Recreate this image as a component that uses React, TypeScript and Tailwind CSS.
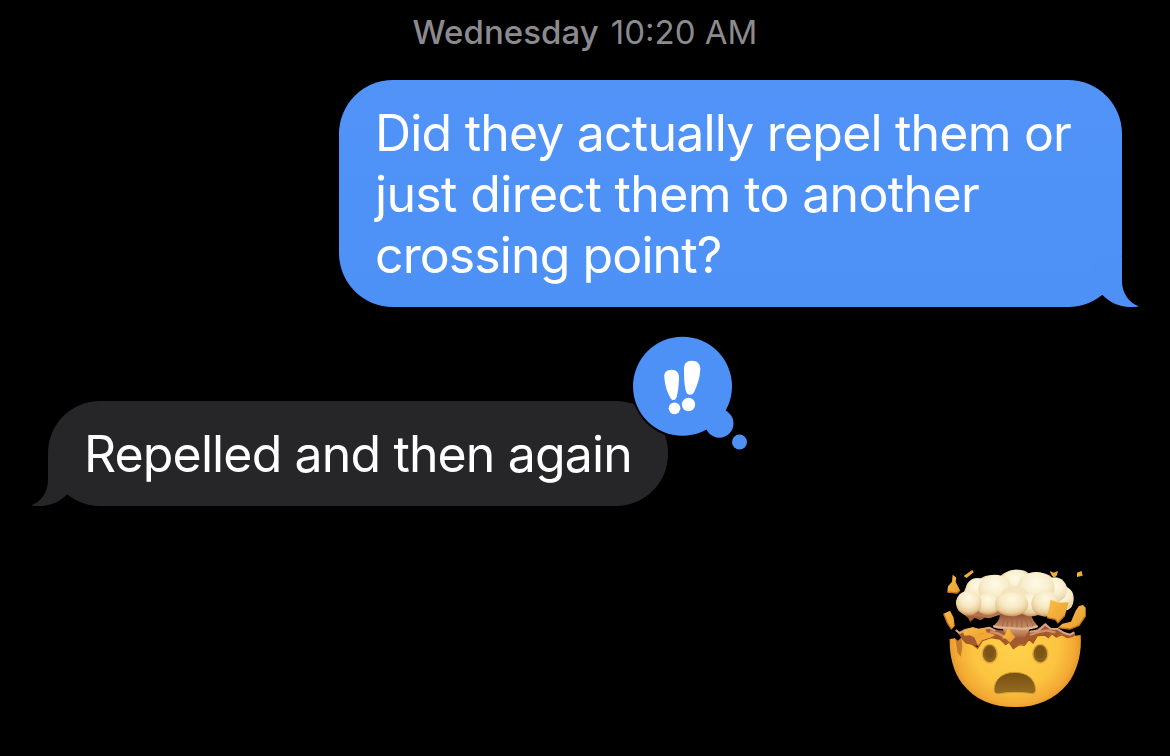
import React from "react";
import clsx from "clsx";

const question = [
  { text: "Did they actually repel them or", className: "tracking-[-0.81px]" },
  { text: "just direct them to another", className: "tracking-[-0.65px]" },
  { text: "crossing point?", className: "tracking-[-0.9px]" },
];

function Tail({ side, className }: { side: "left" | "right"; className: string }) {
  return (
    <svg
      viewBox="0 0 60 50"
      className={clsx(
        "absolute bottom-0 h-[50px] w-[60px]",
        side === "right" ? "-right-[17px]" : "-left-[17px] -scale-x-100",
        className
      )}
      fill="currentColor"
    >
      <path d="M18 0H43V24C43 36 50 46 60 49.3C47 52 33 48 23.5 38L8 28Z" />
    </svg>
  );
}

function Reaction() {
  return (
    <svg viewBox="0 0 420 405" className="absolute -top-[76px] left-[572px] h-[135px] w-[140px]">
      <circle cx="187" cy="184" r="154" fill="#000" />
      <g fill="#4d91f7">
        <circle cx="187.5" cy="184" r="148.5" />
        <circle cx="298" cy="295.5" r="42.5" />
        <circle cx="358.5" cy="351" r="22.5" />
      </g>
      <g fill="#fff">
        <path d="M133 158C131 143 140 135 154 134.500C169 134 178 143 177 160C176 185 174 202 170 215C167 227 156 228 151 218C140 199 135 180 133 158Z" />
        <circle cx="163.500" cy="250" r="17.500" />
        <path d="M192 133C192 115 200 107 215 107C232 107 241 116 241 133C240 158 232 182 222 202C217 212 203 212 199 202C193 185 192 160 192 133Z" />
        <circle cx="205.500" cy="238.500" r="20" />
      </g>
    </svg>
  );
}

function ExplodingHead() {
  return (
    <svg viewBox="0 0 510 495" className="h-[165px] w-[170px]">
      <defs>
        <radialGradient id="face" gradientUnits="userSpaceOnUse" cx="255" cy="270" r="215">
          <stop offset="0" stopColor="#ffd24b" />
          <stop offset="0.6" stopColor="#fcc440" />
          <stop offset="0.83" stopColor="#f3aa34" />
          <stop offset="1" stopColor="#d98526" />
        </radialGradient>
        <radialGradient id="puff" cx="0.5" cy="0.34" r="0.66">
          <stop offset="0" stopColor="#fffae6" />
          <stop offset="0.5" stopColor="#f9efd0" />
          <stop offset="0.85" stopColor="#eddcb0" />
          <stop offset="1" stopColor="#e0c28c" />
        </radialGradient>
        <radialGradient id="lowPuff" cx="0.5" cy="0.3" r="0.7">
          <stop offset="0" stopColor="#fff9e3" />
          <stop offset="0.5" stopColor="#f6e8c2" />
          <stop offset="0.8" stopColor="#e8cb98" />
          <stop offset="1" stopColor="#c4905c" />
        </radialGradient>
        <linearGradient id="stem" x1="0" y1="0" x2="0" y2="1">
          <stop offset="0" stopColor="#92502f" />
          <stop offset="0.65" stopColor="#cf9a72" />
          <stop offset="1" stopColor="#a6623b" />
        </linearGradient>
        <linearGradient id="shard" x1="0" y1="0" x2="1" y2="1">
          <stop offset="0" stopColor="#fcc044" />
          <stop offset="1" stopColor="#e79c30" />
        </linearGradient>
        <linearGradient id="mouth" x1="0" y1="0" x2="0" y2="1">
          <stop offset="0" stopColor="#785010" />
          <stop offset="1" stopColor="#956d22" />
        </linearGradient>
      </defs>

      {/* skull rim behind the cloud stem */}
      <path d="M76 224L88 232L102 222L130 217L150 223L176 216L205 226L310 228L332 216L346 205L360 220L382 222L404 232L420 238L433 230L437 248L380 270L250 280L110 270Z" fill="#a45a30" />
      <path d="M77 225L89 234L105 226L128 220L146 224L178 218L196 228M300 230L325 227L346 208L361 221L383 222L402 234L420 239L433 232" fill="none" stroke="#dda480" strokeWidth="6" strokeLinejoin="round" />
      <path d="M180 230L205 236L222 244M300 240L322 232L350 226L376 232" fill="none" stroke="#cf9169" strokeWidth="7" />

      {/* mushroom cloud */}
      <path d="M84 165L116 190L150 186L178 190L205 181L330 181L390 172L425 155L420 125H95Z" fill="#b5714a" />
      <path d="M112 182L120 201L134 188L152 196L168 186Z" fill="#a55d38" />
      <path d="M210 177C209 194 203 202 189 213C193 222 206 220 218 222L232 246L283 248L300 222L323 216C321 207 308 199 304 179Z" fill="url(#stem)" />
      <path d="M223 185L216 217M235 186L230 218M247 186L246 220M260 186L261 219M273 185L276 219M286 184L294 218M297 183L309 214" stroke="#a76541" strokeWidth="3" fill="none" />
      <path d="M190 213C210 222 230 216 255 220C280 222 305 222 323 213" fill="none" stroke="#e0b393" strokeWidth="6" />
      <path d="M100 120C104 92 122 72 150 71C168 58 190 58 210 66C224 42 284 36 298 58C330 48 360 56 368 72C392 76 408 90 410 102C436 116 438 156 410 166L120 166C90 164 86 130 100 120Z" fill="#ecd8aa" />
      <g fill="url(#puff)">
        <circle cx="396" cy="128" r="35" />
        <circle cx="374" cy="104" r="37" />
        <circle cx="142" cy="104" r="35" />
        <ellipse cx="257" cy="83" rx="44" ry="39" />
        <ellipse cx="195" cy="102" rx="50" ry="43" />
        <ellipse cx="318" cy="98" rx="56" ry="47" />
        <ellipse cx="254" cy="122" rx="42" ry="30" fill="#f3e5bf" />
      </g>
      <g fill="url(#lowPuff)">
        <ellipse cx="174" cy="147" rx="38" ry="33" />
        <ellipse cx="116" cy="144" rx="38" ry="37" />
        <ellipse cx="303" cy="149" rx="40" ry="35" />
        <ellipse cx="346" cy="146" rx="42" ry="39" />
        <ellipse cx="245" cy="148" rx="50" ry="36" />
      </g>

      {/* face */}
      <path d="M59 252L75 250L83 259L94 248L108 263L125 266L143 279L155 257L181 247L211 251L226 267L237 260L250 279L267 267L283 269L297 252L309 263L321 241L343 239L354 247L365 234L378 245L395 237L412 246L430 243L452 240C456 295 442 348 413 386C374 435 317 457 253 456C190 456 134 434 97 386C70 350 58 303 59 252Z" fill="url(#face)" />
      <path d="M76 252L85 258L94 250L97 277L92 305L82 292L79 270Z" fill="#c47a2a" />
      <path d="M96 250L108 264L125 267L143 280L156 258L182 248L210 252L227 269L237 261L250 281L267 269L283 271L297 253L309 264L322 242L344 240L355 248L366 236L379 246L396 239L412 248L430 244" fill="none" stroke="#a3541c" strokeWidth="4" />
      <path d="M99 230L126 218L143 223L165 219L171 233L149 238L139 250L119 241L103 242Z" fill="url(#shard)" />
      <path d="M130 240L150 238L172 232L196 240L180 248L156 256L144 272Z" fill="#f0a838" />
      <path d="M235 217L247 237L256 246L240 263L228 251L216 250L226 237Z" fill="url(#shard)" />

      <g fill="#86601c" stroke="#e2a636" strokeWidth="4">
        <ellipse cx="179" cy="296" rx="22.500" ry="28" />
        <ellipse cx="331" cy="296" rx="22.500" ry="28" />
      </g>
      <g fill="#6b4710">
        <ellipse cx="179" cy="291" rx="14" ry="19" opacity="0.4" />
        <ellipse cx="331" cy="291" rx="14" ry="19" opacity="0.4" />
      </g>
      <path d="M192 404C193 372 218 352 254 352C290 352 316 372 317 404C317 414 309 418 300 415C270 411 238 411 209 416C199 418 192 413 192 404Z" fill="url(#mouth)" stroke="#dc9e34" strokeWidth="3" />

      {/* flying pieces */}
      <g fill="url(#shard)">
        <path d="M68 59L79 68L77 81L90 106L81 114L52 111L54 94L66 80Z" />
        <path d="M101 63L127 45L131 52L110 69Z" />
        <path d="M359 48L371 53L384 48L381 61L373 68L366 62Z" />
        <path d="M441 53L455 48L458 62L441 66Z" />
        <path d="M362 134L386 143L416 142L405 181L384 203L376 193L351 188Z" />
        <path d="M459 150L467 158L467 182L447 211L420 222L384 218L397 206L423 200L437 167L447 153Z" />
        <path d="M41 176L60 167L71 188L74 213L65 223L53 205Z" />
      </g>
      <path d="M52 111L81 114L90 106M351 188L376 193L384 203L405 181M384 218L420 222L447 211L467 182M41 176L53 205L65 223" fill="none" stroke="#c57624" strokeWidth="4" />
    </svg>
  );
}

export default function App() {
  return (
    <main className="flex h-[756px] w-[1170px] flex-col overflow-hidden bg-black font-['Inter',sans-serif] text-white">
      <header className="flex h-20 justify-center gap-3 pt-3 text-[33px] leading-[40px] text-[#8b8b8f]">
        <span className="font-medium tracking-[0.05px]">Wednesday</span>
        <span>10:20 AM</span>
      </header>

      <div className="relative mr-12 flex h-[227px] w-[783px] flex-col self-end rounded-[54px] bg-linear-to-b from-[#5193f7] to-[#4d91f7] pt-[23px] pl-9 text-[50px] leading-[61px]">
        <Tail side="right" className="text-[#4d91f7]" />
        {question.map((line) => (
          <span key={line.text} className={clsx("relative self-start whitespace-nowrap", line.className)}>
            {line.text}
          </span>
        ))}
      </div>

      <div className="relative mt-[94px] ml-12 flex h-[105px] w-[620px] rounded-[52px] bg-[#262628] pt-[23px] pl-9 text-[50px] leading-[61px]">
        <Tail side="left" className="text-[#262628]" />
        <span className="relative whitespace-nowrap tracking-[-0.87px]">Repelled and then again</span>
        <Reaction />
      </div>

      <div className="mt-[49px] mr-[70px] self-end">
        <ExplodingHead />
      </div>
    </main>
  );
}
